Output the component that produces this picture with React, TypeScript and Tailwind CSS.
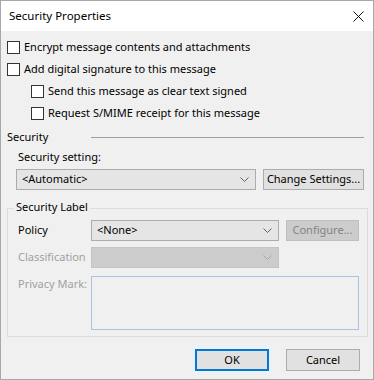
import React from "react";

const font = { fontFamily: '"Noto Sans", "Open Sans", sans-serif' };

function Checkbox({ label }: { label: string }) {
  return (
    <div className="flex h-[22px] items-center">
      <span className="h-[13px] w-[13px] shrink-0 border border-[#333333] bg-white" />
      <span className="ml-[4px] text-[11px] text-black">{label}</span>
    </div>
  );
}

function Chevron({ color = "#606060" }: { color?: string }) {
  return (
    <svg width="9" height="5" viewBox="0 0 9 5" className="shrink-0">
      <path d="M0.5 0.5 L4.5 4.5 L8.5 0.5" fill="none" stroke={color} strokeWidth="1" />
    </svg>
  );
}

function Combo({
  value,
  width,
  disabled,
}: {
  value?: string;
  width: string;
  disabled?: boolean;
}) {
  return (
    <div
      className={
        disabled
          ? `flex h-[21px] items-center justify-between border border-[#c4c4c4] bg-[#cccccc] pl-[5px] pr-[6px] ${width}`
          : `flex h-[21px] items-center justify-between border border-[#acacac] bg-[#e5e5e5] pl-[5px] pr-[6px] ${width}`
      }
    >
      <span className="text-[11px] text-black">{value}</span>
      <Chevron color={disabled ? "#a6a6a6" : "#606060"} />
    </div>
  );
}

export default function App() {
  return (
    <div
      className="flex h-[380px] w-[374px] flex-col border border-[#a8a8a8] bg-[#f0f0f0] text-black"
      style={font}
    >
      {/* title bar */}
      <div className="flex h-[30px] shrink-0 items-center justify-between bg-white pl-[8px] pr-[8px]">
        <span className="text-[11.5px]">Security Properties</span>
        <svg width="11" height="11" viewBox="0 0 11 11" className="mr-[1px]">
          <path d="M0.5 0.5 L10.5 10.5 M10.5 0.5 L0.5 10.5" stroke="#111" strokeWidth="1" />
        </svg>
      </div>

      <div className="flex flex-col pl-[6px] pr-[6px] pt-[5px]">
        <Checkbox label="Encrypt message contents and attachments" />
        <Checkbox label="Add digital signature to this message" />
        <div className="pl-[24px]">
          <Checkbox label="Send this message as clear text signed" />
          <Checkbox label="Request S/MIME receipt for this message" />
        </div>

        {/* Security section */}
        <div className="mt-[4px] flex h-[18px] items-center">
          <span className="w-[84px] text-[11px]">Security</span>
          <div className="h-px w-[273px] bg-[#a0a0a0]" />
        </div>
        <div className="mt-[2px] flex h-[18px] items-center pl-[11px] text-[11px]">
          Security setting:
        </div>
        <div className="mt-[3px] flex items-center pl-[9px]">
          <Combo value="<Automatic>" width="w-[240px]" />
          <button className="ml-[7px] h-[21px] w-[101px] whitespace-nowrap border border-[#adadad] bg-[#e1e1e1] text-[11px]">
            Change Settings...
          </button>
        </div>

        {/* Security Label group */}
        <div className="relative mt-[18px] h-[129px] w-[361px] border border-[#dcdcdc] pl-[83px] pt-[11px]">
          <span className="absolute left-[6px] top-[-10px] bg-[#f0f0f0] px-[2px] text-[11px]">
            Security Label
          </span>
          <div className="flex items-center">
            <span className="absolute left-[10px] text-[11px]">Policy</span>
            <Combo value="<None>" width="w-[188px]" />
            <button className="ml-[7px] h-[21px] w-[73px] whitespace-nowrap border border-[#bfbfbf] bg-[#cccccc] text-[11px] text-[#838383]">
              Configure...
            </button>
          </div>
          <div className="mt-[6px] flex items-center">
            <span className="absolute left-[10px] text-[11px] text-[#a0a0a0]">Classification</span>
            <Combo width="w-[188px]" disabled />
          </div>
          <div className="relative mt-[8px] flex">
            <span className="absolute left-[-73px] top-0 text-[11px] text-[#a0a0a0]">
              Privacy Mark:
            </span>
            <div className="h-[54px] w-[268px] border border-[#a9c4e3] bg-[#f0f0f0]" />
          </div>
        </div>

        {/* buttons */}
        <div className="mt-[12px] flex justify-end pr-[7px]">
          <button className="h-[22px] w-[74px] border-2 border-[#0078d7] bg-[#e1e1e1] text-[11px]">
            OK
          </button>
          <button className="ml-[17px] h-[22px] w-[74px] border border-[#adadad] bg-[#e1e1e1] text-[11px]">
            Cancel
          </button>
        </div>
      </div>
    </div>
  );
}
